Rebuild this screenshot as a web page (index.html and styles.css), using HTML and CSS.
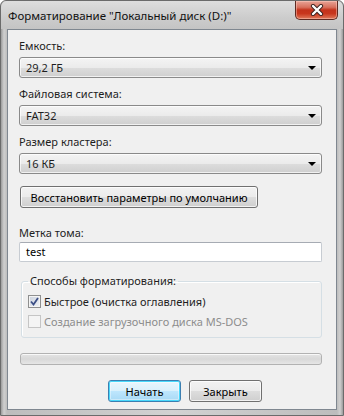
FILE: index.html
```html
<!DOCTYPE html>
<html lang="ru">
<head>
<meta charset="utf-8">
<title>Форматирование</title>
<link rel="stylesheet" href="styles.css">
</head>
<body>
<div class="window">
  <div class="titlebar">
    <span class="title">Форматирование "Локальный диск (D:)"</span>
    <div class="close">
      <svg width="14" height="12" viewBox="0 0 14 12"><path d="M3 2 L11 10 M11 2 L3 10" stroke="#3a2320" stroke-width="4.2" stroke-linecap="round"/><path d="M3 2 L11 10 M11 2 L3 10" stroke="#ffffff" stroke-width="2.4" stroke-linecap="round"/></svg>
    </div>
  </div>
  <div class="client">
    <div class="label">Емкость:</div>
    <div class="combo"><span>29,2 ГБ</span><span class="arrow"></span></div>
    <div class="label">Файловая система:</div>
    <div class="combo"><span>FAT32</span><span class="arrow"></span></div>
    <div class="label">Размер кластера:</div>
    <div class="combo"><span>16 КБ</span><span class="arrow"></span></div>
    <div class="btn restore">Восстановить параметры по умолчанию</div>
    <div class="label label-vol">Метка тома:</div>
    <div class="textbox">test</div>
    <fieldset class="group">
      <legend>Способы форматирования:</legend>
      <div class="check-row">
        <span class="checkbox checked"><svg width="9" height="9" viewBox="0 0 9 9"><path d="M1 4.5 L3.5 7.5 L8 1" fill="none" stroke="#3c4f86" stroke-width="1.8"/></svg></span>
        <span>Быстрое (очистка оглавления)</span>
      </div>
      <div class="check-row disabled">
        <span class="checkbox"></span>
        <span>Создание загрузочного диска MS-DOS</span>
      </div>
    </fieldset>
    <div class="progress"></div>
    <div class="actions">
      <div class="btn default">Начать</div>
      <div class="btn">Закрыть</div>
    </div>
  </div>
</div>
</body>
</html>
```
FILE: styles.css
```css
html, body {
  margin: 0;
  padding: 0;
  background: #ffffff;
}
body {
  font-family: "Noto Sans", "Open Sans", sans-serif;
  font-size: 11px;
  color: #000;
}
.window {
  width: 344px;
  height: 416px;
  box-sizing: border-box;
  display: flex;
  flex-direction: column;
  border: 1px solid #6b6b6b;
  border-radius: 6px 6px 0 0;
  background: linear-gradient(90deg, #9c9c9c 0px, #cfcfcf 3px, #bdbdbd 6px, #d2d2d2 50%, #bdbdbd calc(100% - 6px), #cfcfcf calc(100% - 3px), #9c9c9c 100%);
}
.titlebar {
  height: 28px;
  display: flex;
  justify-content: space-between;
  align-items: flex-start;
  background: linear-gradient(180deg, #dedede 0%, #cccccc 60%, #c4c4c4 100%);
  border-radius: 6px 6px 0 0;
}
.title {
  padding: 7px 0 0 7px;
  line-height: 16px;
  font-size: 11.5px;
  color: #111;
  white-space: nowrap;
}
.close {
  width: 43px;
  height: 19px;
  margin-right: 5px;
  box-sizing: border-box;
  border: 1px solid #5e2a22;
  border-top: none;
  border-radius: 0 0 5px 5px;
  background: linear-gradient(180deg, #e8a497 0%, #d7705d 35%, #c3321b 50%, #c8361d 70%, #e07a5c 100%);
  display: flex;
  align-items: center;
  justify-content: center;
  box-shadow: inset 0 0 0 1px rgba(255,210,200,0.45);
}
.client {
  flex: 1;
  margin: 0 6px 5px 6px;
  border: 1px solid #7f8790;
  background: #f0f0f0;
  padding: 8px 14px 0 11px;
  display: flex;
  flex-direction: column;
  color: #1e1e1e;
}
.label {
  line-height: 16px;
  margin-top: 8px;
}
.label:first-child {
  margin-top: 0;
}
.combo {
  margin-top: 3px;
  height: 21px;
  box-sizing: border-box;
  border: 1px solid #8a8a8a;
  border-radius: 3px;
  background: linear-gradient(180deg, #f4f4f4 0%, #ebebeb 50%, #dddddd 51%, #cfcfcf 100%);
  display: flex;
  align-items: center;
  justify-content: space-between;
  padding: 0 5px 0 6px;
  box-shadow: inset 0 0 0 1px rgba(255,255,255,0.7);
}
.arrow {
  width: 0;
  height: 0;
  border-left: 4px solid transparent;
  border-right: 4px solid transparent;
  border-top: 4px solid #000;
}
.btn {
  height: 22px;
  box-sizing: border-box;
  border: 1px solid #707070;
  border-radius: 3px;
  background: linear-gradient(180deg, #f2f2f2 0%, #ebebeb 50%, #dddddd 51%, #cfcfcf 100%);
  box-shadow: inset 0 0 0 1px rgba(255,255,255,0.75);
  display: flex;
  align-items: center;
  justify-content: center;
  white-space: nowrap;
  color: #000;
}
.restore {
  margin-top: 12px;
  margin-left: 1px;
  width: 238px;
}
.label-vol {
  margin-top: 17px;
}
.textbox {
  margin-top: 1px;
  height: 20px;
  box-sizing: border-box;
  border: 1px solid #c7ccd2;
  border-top-color: #a6abb3;
  border-radius: 2px;
  background: #ffffff;
  padding: 0 6px;
  line-height: 18px;
  color: #000;
}
.group {
  margin: 11px 0 0 2px;
  padding: 1px 6px 7px 6px;
  border: 1px solid #d5dfe5;
  border-radius: 3px;
  box-shadow: inset 1px 1px 0 #ffffff;
}
.group legend {
  padding: 0 2px;
  line-height: 16px;
}
.check-row {
  display: flex;
  align-items: center;
  gap: 3px;
  height: 18px;
  margin-top: 2px;
}
.checkbox {
  width: 13px;
  height: 13px;
  box-sizing: border-box;
  border: 1px solid #8e8f8f;
  background: linear-gradient(135deg, #dcdcdc 0%, #f6f6f6 100%);
  box-shadow: inset 0 0 0 1px #f4f4f4;
  display: flex;
  align-items: center;
  justify-content: center;
}
.checkbox.checked {
  background: linear-gradient(135deg, #cbd2dd 0%, #f0f2f6 100%);
}
.disabled {
  color: #8d8d8d;
}
.disabled .checkbox {
  border-color: #c5c5c5;
  background: #f4f4f4;
}
.progress {
  margin: 15px 0 0 1px;
  height: 12px;
  box-sizing: border-box;
  border: 1px solid #b2b2b2;
  border-radius: 3px;
  background: linear-gradient(180deg, #e4e4e4 0%, #d8d8d8 50%, #e6e6e6 100%);
  box-shadow: inset 0 1px 0 #f8f8f8;
}
.actions {
  display: flex;
  gap: 8px;
  margin-top: 15px;
  padding-left: 89px;
}
.actions .btn {
  width: 73px;
}
.btn.default {
  border-color: #3c7fb1;
  box-shadow: inset 0 0 0 1px #48d8fb, inset 0 0 0 2px rgba(255,255,255,0.4);
  background: linear-gradient(180deg, #eaf6fd 0%, #d9f0fc 50%, #bee6fd 51%, #a7d9f5 100%);
}
```
